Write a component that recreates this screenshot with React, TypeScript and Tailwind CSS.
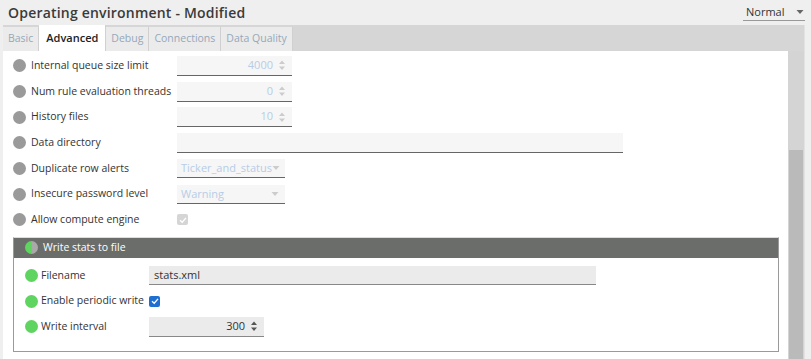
import { ReactNode } from "react";

const font = { fontFamily: '"Open Sans", "Noto Sans", sans-serif' };

function Spin({ dark }: { dark?: boolean }) {
  const c = dark ? "#555" : "#ccc";
  return (
    <svg width="8" height="12" viewBox="0 0 8 12" className="ml-[5px] shrink-0">
      <path d="M1 5 L4 1.5 L7 5 Z" fill={c} />
      <path d="M1 7.5 L4 11 L7 7.5 Z" fill={c} />
    </svg>
  );
}

function Caret() {
  return (
    <svg width="8" height="6" viewBox="0 0 8 6" className="shrink-0">
      <path d="M0.5 1 L7.5 1 L4 5 Z" fill="#ccc" />
    </svg>
  );
}

function Dot({ green }: { green?: boolean }) {
  return (
    <span
      className={`w-[13px] h-[13px] rounded-full shrink-0 ${green ? "bg-[#5fd460]" : "bg-[#9a9a9a]"}`}
    />
  );
}

function Row({ label, children }: { label: string; children?: ReactNode }) {
  return (
    <div className="h-[25.7px] flex items-center pl-[10px]">
      <Dot />
      <span className="ml-[5px] w-[146px] text-[10.5px] text-[#333] whitespace-nowrap">{label}</span>
      {children}
    </div>
  );
}

function GroupRow({ label, children }: { label: string; children?: ReactNode }) {
  return (
    <div className="h-[25.5px] flex items-center pl-[11px]">
      <Dot green />
      <span className="ml-[3px] w-[108px] text-[10.5px] text-[#333] whitespace-nowrap">{label}</span>
      {children}
    </div>
  );
}

function NumBox({ value }: { value: string }) {
  return (
    <div className="w-[115px] h-[20px] bg-[#f6f6f6] border-b border-[#666] flex items-center justify-end pr-[6px] text-[11px] text-[#b7cde6]">
      {value}
      <Spin />
    </div>
  );
}

function SelectBox({ value }: { value: string }) {
  return (
    <div className="w-[108px] h-[19px] bg-[#f6f6f6] border-b border-[#666] flex items-center justify-between pl-[4px] pr-[6px] text-[11px] text-[#b7cde6]">
      {value}
      <Caret />
    </div>
  );
}

const tabs = ["Basic", "Advanced", "Debug", "Connections", "Data Quality"];

export default function App() {
  return (
    <div className="w-[811px] h-[359px] overflow-hidden bg-[#efefef] flex flex-col" style={font}>
      <div className="h-[25px] shrink-0 flex items-center justify-between pl-[8px] pr-[6px]">
        <span className="text-[14px] font-semibold text-[#3a3a3a] tracking-[0.2px]">
          Operating environment - Modified
        </span>
        <div className="w-[62px] h-[17px] border-b border-[#999] flex items-center justify-between pl-[3px] pr-[1px] text-[11px] text-[#333]">
          Normal
          <svg width="8" height="6" viewBox="0 0 8 6">
            <path d="M0.5 1 L7.5 1 L4 5 Z" fill="#666" />
          </svg>
        </div>
      </div>
      <div className="ml-[3px] w-[802px] flex-1 flex flex-col border-r border-[#e2e2e2]">
        <div className="h-[26px] shrink-0 bg-[#d6d6d6] flex items-end">
          {tabs.map((t) => (
            <div
              key={t}
              className={`flex items-center border-r border-[#d0d0d0] ${
                t === "Advanced"
                  ? "bg-white text-[#222] text-[11px] font-semibold h-[26px] px-[7px]"
                  : "bg-[#ebebeb] text-[#96a8ba] text-[10.5px] h-[24px] px-[5px]"
              }`}
            >
              {t}
            </div>
          ))}
        </div>
        <div className="flex-1 flex">
          <div className="flex-1 bg-white pt-[2px] flex flex-col">
            <Row label="Internal queue size limit">
              <NumBox value="4000" />
            </Row>
            <Row label="Num rule evaluation threads">
              <NumBox value="0" />
            </Row>
            <Row label="History files">
              <NumBox value="10" />
            </Row>
            <Row label="Data directory">
              <div className="w-[446px] h-[20px] bg-[#f6f6f6] border-b border-[#666]" />
            </Row>
            <Row label="Duplicate row alerts">
              <SelectBox value="Ticker_and_status" />
            </Row>
            <Row label="Insecure password level">
              <SelectBox value="Warning" />
            </Row>
            <Row label="Allow compute engine">
              <div className="w-[11px] h-[11px] rounded-[2px] bg-[#d5d5d5] flex items-center justify-center">
                <svg width="8" height="8" viewBox="0 0 8 8">
                  <path d="M1 4.2 L3.2 6.2 L7 1.8" stroke="#fff" strokeWidth="1.3" fill="none" />
                </svg>
              </div>
            </Row>
            <div className="mt-[4px] ml-[10px] mr-[9px] border border-[#9a9a9a] border-t-[#dcdcdc] pb-[12px]">
              <div className="h-[20px] bg-[#6b6d6b] flex items-center pl-[11px]">
                <span className="w-[13px] h-[13px] rounded-full overflow-hidden flex">
                  <span className="w-1/2 h-full bg-[#5fd460]" />
                  <span className="w-1/2 h-full bg-[#a9a9a9]" />
                </span>
                <span className="ml-[5px] text-[10.5px] text-white">Write stats to file</span>
              </div>
              <div className="pt-[5px]">
                <GroupRow label="Filename">
                  <div className="w-[447px] h-[19px] bg-[#ebebeb] border-b border-[#888] flex items-center pl-[5px] text-[11px] text-[#333]">
                    stats.xml
                  </div>
                </GroupRow>
                <GroupRow label="Enable periodic write">
                  <div className="w-[11px] h-[11px] rounded-[2px] bg-[#1f6fd1] flex items-center justify-center">
                    <svg width="8" height="8" viewBox="0 0 8 8">
                      <path d="M1 4.2 L3.2 6.2 L7 1.8" stroke="#fff" strokeWidth="1.3" fill="none" />
                    </svg>
                  </div>
                </GroupRow>
                <GroupRow label="Write interval">
                  <div className="w-[115px] h-[20px] bg-[#ebebeb] border-b border-[#888] flex items-center justify-end pr-[6px] text-[11px] text-[#333]">
                    300
                    <Spin dark />
                  </div>
                </GroupRow>
              </div>
            </div>
          </div>
          <div className="w-[16px] bg-[#d4d4d4] flex flex-col">
            <div className="h-[99px]" />
            <div className="flex-1 bg-[#bababa] mx-[1px]" />
          </div>
        </div>
      </div>
    </div>
  );
}
